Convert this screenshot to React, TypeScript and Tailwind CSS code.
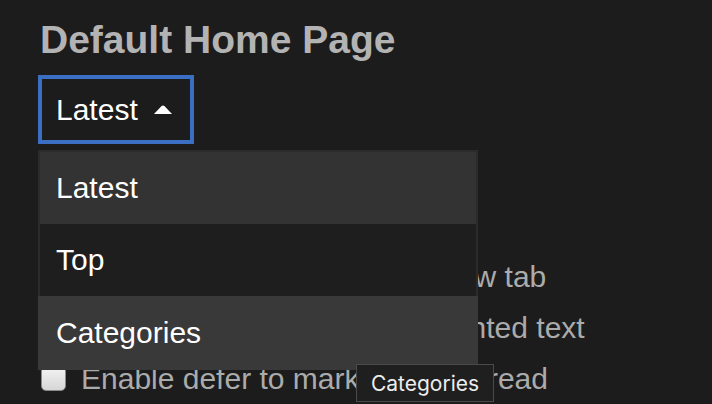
import { useState } from "react";

const options = ["Latest", "Top", "Categories"];

const rows = [
  "Open all external links in a new tab",
  "Enable quote reply for highlighted text",
  "Enable defer to mark topics unread",
];

function CaretUp() {
  return (
    <svg width="18" height="9" viewBox="0 0 18 9" className="block">
      <path d="M0 9 L7.6 1.1 Q9 -0.3 10.4 1.1 L18 9 Z" fill="#ffffff" />
    </svg>
  );
}

export default function App() {
  const [hovered] = useState("Categories");

  return (
    <div className="relative h-[404px] w-[712px] overflow-hidden bg-[#1c1c1c] pl-[38px] font-['Liberation_Sans',Arial,sans-serif]">
      <h2 className="mt-[20px] ml-[2px] text-[39px] font-bold leading-[39px] text-[#b3b3b3]">
        Default Home Page
      </h2>

      {/* Select button */}
      <div className="relative mt-[16px] w-[156px]">
        <button className="flex h-[69px] w-[156px] items-center gap-[16px] border-4 border-[#3a6fc4] bg-[#1c1c1c] pl-[14px] text-[30px] leading-[30px] text-white">
          <span>Latest</span>
          <CaretUp />
        </button>

        {/* Open menu */}
        <div className="absolute left-0 top-[75px] z-10 w-[440px] border-2 border-[#2b2b2b] bg-[#2b2b2b]">
          {options.map((opt, i) => (
            <div
              key={opt}
              className={
                opt === hovered
                  ? "-mx-[2px] -mb-[2px] flex h-[74px] items-center bg-[#393939] pb-[2px] pl-[18px] text-[30px] text-white"
                  : i === 0
                  ? "flex h-[72px] items-center bg-[#333333] pb-[2px] pl-[16px] text-[30px] text-white"
                  : "flex h-[72px] items-center bg-[#1e1e1e] pb-[2px] pl-[16px] text-[30px] text-white"
              }
            >
              {opt}
            </div>
          ))}
        </div>
      </div>

      {/* Checkbox rows behind the menu */}
      <div className="mt-[118px] flex flex-col gap-[21px]">
        {rows.map((r) => (
          <label key={r} className="flex h-[30px] items-start">
            <span className="ml-[3px] mt-[2px] block h-[25px] w-[25px] shrink-0 rounded-[5px] border border-[#8a8a8a] bg-gradient-to-b from-[#f4f4f4] to-[#d6d6d6]" />
            <span className="ml-[15px] whitespace-nowrap text-[30px] leading-[30px] text-[#ababab]">
              {r}
            </span>
          </label>
        ))}
      </div>

      {/* Tooltip */}
      <div className="absolute left-[356px] top-[364px] z-20 flex h-[38px] w-[138px] items-center justify-center border border-[#4a4a4a] bg-[#1f1f1f] font-['Inter',sans-serif] text-[21px] leading-none text-[#ececec]">
        Categories
      </div>
    </div>
  );
}
